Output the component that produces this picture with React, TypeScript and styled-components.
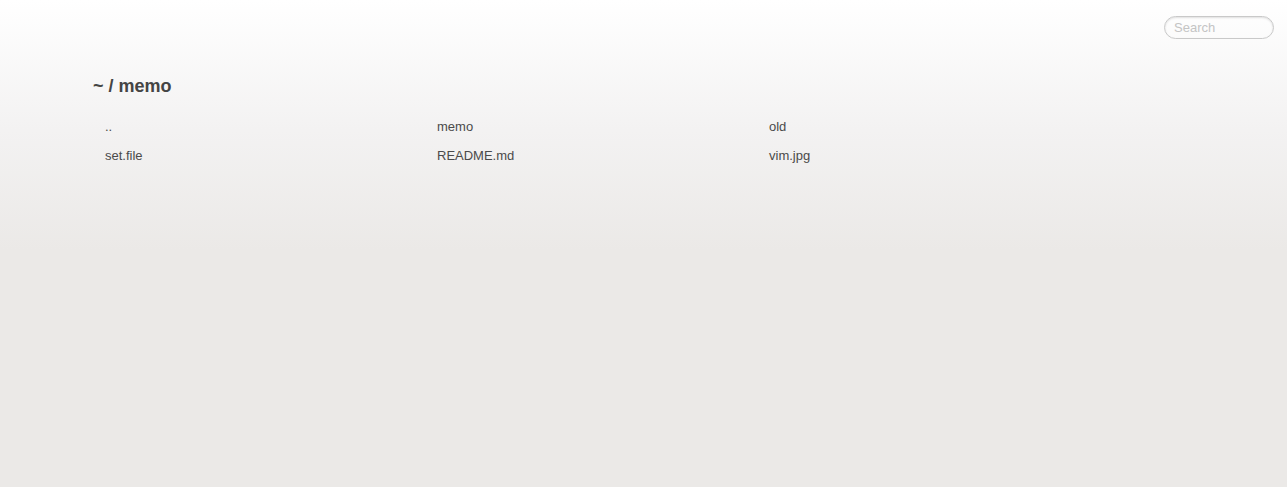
import React from "react";
import styled, { createGlobalStyle } from "styled-components";

const Global = createGlobalStyle`
  html, body { margin: 0; padding: 0; }
  body {
    min-height: 487px;
    font-family: "Liberation Sans", Arial, sans-serif;
    color: #444;
    background: linear-gradient(to bottom, #ffffff 0px, #f3f2f2 130px, #ebe9e7 250px, #ebe9e7 100%) no-repeat;
    background-color: #ebe9e7;
  }
`;

const Page = styled.div`
  min-height: 487px;
  display: flex;
  flex-direction: column;
`;

const TopBar = styled.div`
  display: flex;
  justify-content: flex-end;
  padding: 16px 13px 0 0;
`;

const SearchInput = styled.input`
  box-sizing: border-box;
  width: 110px;
  height: 23px;
  border: 1px solid #c9c9c9;
  border-radius: 12px;
  padding: 0 9px;
  font-family: "Liberation Sans", Arial, sans-serif;
  font-size: 13px;
  color: #444;
  background: transparent;
  box-shadow: inset 0 1px 2px rgba(0,0,0,0.12);
  outline: none;
  &::placeholder { color: #c4c4c4; }
`;

const Main = styled.main`
  padding: 36px 0 0 93px;
`;

const Title = styled.h1`
  margin: 0 0 15px;
  font-size: 18px;
  font-weight: bold;
  line-height: 22px;
  color: #444;
`;

const Grid = styled.ul`
  list-style: none;
  margin: 0;
  padding: 0;
  display: grid;
  grid-template-columns: repeat(3, 332px);
  row-gap: 0;
`;

const Item = styled.li`
  padding: 0 12px;
  height: 29px;
  line-height: 29px;
  font-size: 13px;
  color: #4a4a4a;
`;

const files = ["..", "memo", "old", "set.file", "README.md", "vim.jpg"];

export default function App() {
  return (
    <Page>
      <Global />
      <TopBar>
        <SearchInput placeholder="Search" />
      </TopBar>
      <Main>
        <Title>~ / memo</Title>
        <Grid>
          {files.map((f) => (
            <Item key={f}>{f}</Item>
          ))}
        </Grid>
      </Main>
    </Page>
  );
}
